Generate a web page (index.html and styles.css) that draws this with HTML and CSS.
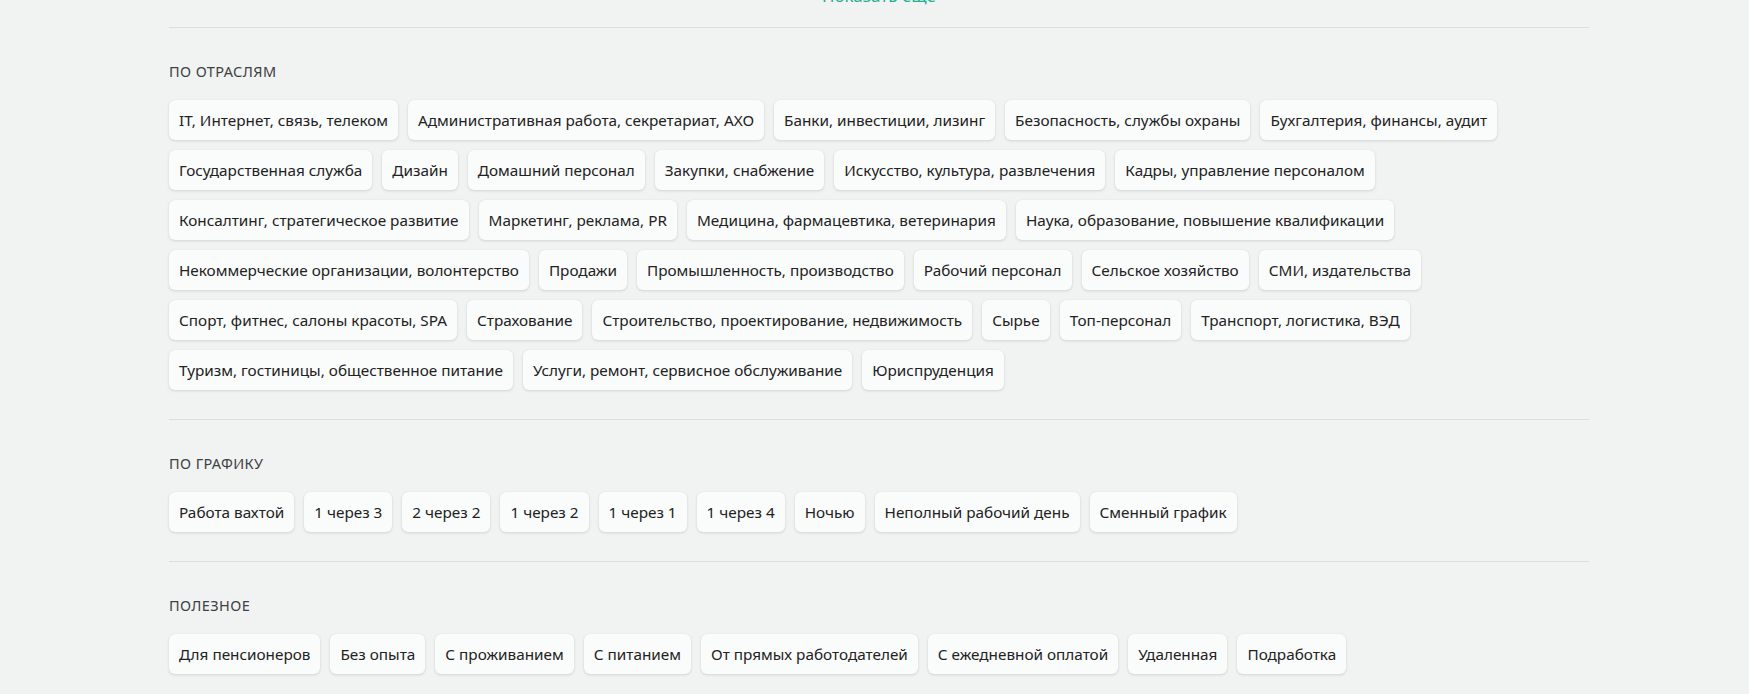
FILE: index.html
```html
<!DOCTYPE html>
<html lang="ru">
<head>
<meta charset="utf-8">
<title>Вакансии</title>
<link rel="stylesheet" href="styles.css">
</head>
<body>
<div class="page">
  <div class="container">
    <div class="more"><a class="more-link" href="#">Показать еще</a></div>

    <section class="group">
      <h2 class="group-title">ПО ОТРАСЛЯМ</h2>
      <ul class="chips">
        <li><a class="chip" href="#">IT, Интернет, связь, телеком</a></li>
        <li><a class="chip" href="#">Административная работа, секретариат, АХО</a></li>
        <li><a class="chip" href="#">Банки, инвестиции, лизинг</a></li>
        <li><a class="chip" href="#">Безопасность, службы охраны</a></li>
        <li><a class="chip" href="#">Бухгалтерия, финансы, аудит</a></li>
        <li><a class="chip" href="#">Государственная служба</a></li>
        <li><a class="chip" href="#">Дизайн</a></li>
        <li><a class="chip" href="#">Домашний персонал</a></li>
        <li><a class="chip" href="#">Закупки, снабжение</a></li>
        <li><a class="chip" href="#">Искусство, культура, развлечения</a></li>
        <li><a class="chip" href="#">Кадры, управление персоналом</a></li>
        <li><a class="chip" href="#">Консалтинг, стратегическое развитие</a></li>
        <li><a class="chip" href="#">Маркетинг, реклама, PR</a></li>
        <li><a class="chip" href="#">Медицина, фармацевтика, ветеринария</a></li>
        <li><a class="chip" href="#">Наука, образование, повышение квалификации</a></li>
        <li><a class="chip" href="#">Некоммерческие организации, волонтерство</a></li>
        <li><a class="chip" href="#">Продажи</a></li>
        <li><a class="chip" href="#">Промышленность, производство</a></li>
        <li><a class="chip" href="#">Рабочий персонал</a></li>
        <li><a class="chip" href="#">Сельское хозяйство</a></li>
        <li><a class="chip" href="#">СМИ, издательства</a></li>
        <li><a class="chip" href="#">Спорт, фитнес, салоны красоты, SPA</a></li>
        <li><a class="chip" href="#">Страхование</a></li>
        <li><a class="chip" href="#">Строительство, проектирование, недвижимость</a></li>
        <li><a class="chip" href="#">Сырье</a></li>
        <li><a class="chip" href="#">Топ-персонал</a></li>
        <li><a class="chip" href="#">Транспорт, логистика, ВЭД</a></li>
        <li><a class="chip" href="#">Туризм, гостиницы, общественное питание</a></li>
        <li><a class="chip" href="#">Услуги, ремонт, сервисное обслуживание</a></li>
        <li><a class="chip" href="#">Юриспруденция</a></li>
      </ul>
    </section>

    <section class="group">
      <h2 class="group-title">ПО ГРАФИКУ</h2>
      <ul class="chips">
        <li><a class="chip" href="#">Работа вахтой</a></li>
        <li><a class="chip" href="#">1 через 3</a></li>
        <li><a class="chip" href="#">2 через 2</a></li>
        <li><a class="chip" href="#">1 через 2</a></li>
        <li><a class="chip" href="#">1 через 1</a></li>
        <li><a class="chip" href="#">1 через 4</a></li>
        <li><a class="chip" href="#">Ночью</a></li>
        <li><a class="chip" href="#">Неполный рабочий день</a></li>
        <li><a class="chip" href="#">Сменный график</a></li>
      </ul>
    </section>

    <section class="group">
      <h2 class="group-title">ПОЛЕЗНОЕ</h2>
      <ul class="chips">
        <li><a class="chip" href="#">Для пенсионеров</a></li>
        <li><a class="chip" href="#">Без опыта</a></li>
        <li><a class="chip" href="#">С проживанием</a></li>
        <li><a class="chip" href="#">С питанием</a></li>
        <li><a class="chip" href="#">От прямых работодателей</a></li>
        <li><a class="chip" href="#">С ежедневной оплатой</a></li>
        <li><a class="chip" href="#">Удаленная</a></li>
        <li><a class="chip" href="#">Подработка</a></li>
      </ul>
    </section>
  </div>
</div>
</body>
</html>
```

FILE: styles.css
```css
html, body {
  margin: 0;
  padding: 0;
  background: #f1f2f2;
  font-family: "Noto Sans", "Open Sans", sans-serif;
  color: #222;
}

.page {
  padding-left: 169px;
  overflow: hidden;
  height: 694px;
}

.container {
  width: 1420px;
}

.more {
  display: flow-root;
  height: 27px;
  border-bottom: 1px solid #dcdfdf;
  text-align: center;
}

.more-link {
  display: block;
  margin-top: -14px;
  line-height: 20px;
  font-size: 17px;
  color: #1fae92;
  text-decoration: none;
}

.group {
  padding: 33px 0 29px;
  border-bottom: 1px solid #dcdfdf;
}

.group:last-child {
  border-bottom: none;
}

.group-title {
  margin: 0 0 19px;
  font-size: 14.5px;
  line-height: 20px;
  font-weight: 400;
  color: #3d4142;
  letter-spacing: 0.4px;
}

.chips {
  list-style: none;
  margin: 0;
  padding: 0;
  display: flex;
  flex-wrap: wrap;
  gap: 10px;
}

.chip {
  display: block;
  height: 40px;
  box-sizing: border-box;
  padding: 1px 10px 0;
  line-height: 39px;
  font-size: 15.3px;
  color: #222;
  text-decoration: none;
  white-space: nowrap;
  background: #fafbfb;
  border-radius: 6px;
  box-shadow: 0 1px 3px rgba(0, 0, 0, 0.13), 0 0 1px rgba(0, 0, 0, 0.06);
}
```
